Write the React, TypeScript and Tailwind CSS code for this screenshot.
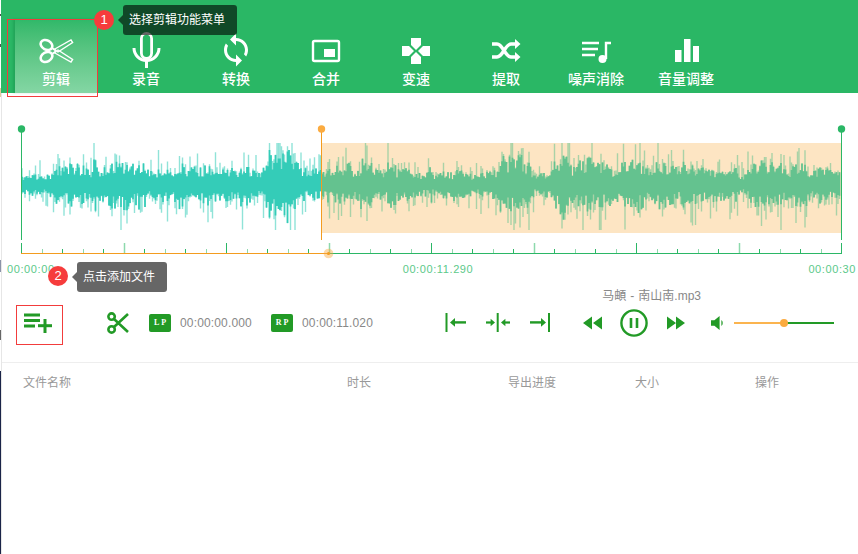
import type { ReactNode } from "react"

// deterministic noise so the wave form is the same on every load
function makeRandom(seed: number) {
  let s = seed
  return () => {
    s = (s + 0x6d2b79f5) | 0
    let t = Math.imul(s ^ (s >>> 15), 1 | s)
    t = (t + Math.imul(t ^ (t >>> 7), 61 | t)) ^ t
    return ((t ^ (t >>> 14)) >>> 0) / 4294967296
  }
}

const envelope: [number, number][] = [
  [21, 8], [48, 9], [55, 14], [80, 18], [120, 18], [150, 17], [190, 17], [230, 16], [255, 12], [266, 13],
  [268, 29], [290, 33], [300, 22], [310, 12], [321, 11], [335, 15], [360, 17], [390, 16], [410, 14], [430, 12],
  [445, 13], [480, 11], [498, 12], [502, 27], [525, 25], [535, 12], [552, 13], [560, 25], [572, 16], [585, 25],
  [597, 23], [612, 15], [630, 21], [650, 17], [665, 18], [697, 15], [730, 12], [747, 11], [763, 17], [797, 17],
  [815, 16], [830, 12], [841, 13],
]

function ampAt(x: number) {
  for (let i = 1; i < envelope.length; i++) {
    const [x0, a0] = envelope[i - 1]
    const [x1, a1] = envelope[i]
    if (x <= x1) return a0 + ((a1 - a0) * (x - x0)) / (x1 - x0)
  }
  return 10
}

function buildWave(from: number, to: number, seed: number) {
  const rnd = makeRandom(seed)
  let core = ""
  let peaks = ""
  const mid = 184.5
  let clump = 1
  let clumpLeft = 0
  for (let x = from + 1; x < to; x += 1.5) {
    // bars come in little groups of about the same height
    if (clumpLeft <= 0) {
      clump = 0.75 + 0.55 * rnd()
      clumpLeft = 2 + Math.floor(rnd() * 6)
    }
    clumpLeft--
    const a = ampAt(x) * clump
    const up = a * (0.5 + 0.7 * rnd())
    const down = a * (0.5 + 0.75 * rnd())
    core += `M${x} ${Math.max(143, mid - up).toFixed(1)}V${Math.min(230, mid + down).toFixed(1)}`
    const extraUp = Math.pow(rnd(), 4) * (a + 8)
    const extraDown = Math.pow(rnd(), 4) * (a + 10)
    peaks += `M${x} ${Math.max(143, mid - up - extraUp).toFixed(1)}V${Math.min(230, mid + down + extraDown).toFixed(1)}`
  }
  return { core, peaks }
}

const leftWave = buildWave(21, 321, 11)
const rightWave = buildWave(321, 841, 47)

const ticks = Array.from({ length: 41 }, (_, i) => i)

function WaveForm() {
  return (
    <svg width="856" height="140" viewBox="2 120 856 140" className="block">
      <rect x="321" y="143" width="520" height="90" fill="#fde5c3" />
      <path d={leftWave.peaks} stroke="#34ccb8" strokeOpacity="0.55" strokeWidth="1.4" fill="none" />
      <path d={leftWave.core} stroke="#34ccb8" strokeWidth="1.7" fill="none" />
      <path d={rightWave.peaks} stroke="#64c28f" strokeOpacity="0.55" strokeWidth="1.4" fill="none" />
      <path d={rightWave.core} stroke="#64c28f" strokeWidth="1.7" fill="none" />

      <path d="M21.5 129V240" stroke="#2bb766" />
      <circle cx="21.5" cy="129" r="3.7" fill="#2bb766" />
      <path d="M321.5 129V240" stroke="#f39c1f" />
      <circle cx="321.5" cy="129" r="3.7" fill="#fbab40" />
      <path d="M841.5 129V240" stroke="#2bb766" />
      <circle cx="841.5" cy="129" r="3.7" fill="#2bb766" />

      {ticks.map((i) => {
        const x = Math.round(21 + i * 20.5) + 0.5
        const tall = i % 5 === 0
        const light = i % 2 === 1
        return (
          <path
            key={i}
            d={`M${x} ${tall ? 243 : 249}V253`}
            stroke={light ? "#8dd9ac" : "#2bb766"}
            strokeWidth={tall && light ? 1.5 : 1}
          />
        )
      })}
      <path d="M21 253.5H328" stroke="#f39c1f" />
      <path d="M328 253.5H842" stroke="#2bb766" />
      <circle cx="328.5" cy="253.5" r="4.8" fill="#fbab40" fillOpacity="0.45" />
      <circle cx="328.5" cy="253.5" r="1.6" fill="#f39c1f" />
    </svg>
  )
}

function ScissorsIcon() {
  return (
    <svg width="36" height="36" viewBox="0 0 36 36" fill="none" stroke="white" strokeWidth="2">
      <ellipse cx="8.5" cy="13" rx="6.2" ry="4.6" transform="rotate(28 8.5 13)" strokeWidth="2.6" />
      <ellipse cx="8.5" cy="25" rx="6.2" ry="4.6" transform="rotate(-28 8.5 25)" strokeWidth="2.6" />
      <path d="M14 16l4 2.5M14 22l4-2.5" />
      <path d="M16 17.5L33 8l1.6 2.6L20 20z" strokeWidth="1.4" />
      <path d="M16 20.5L33 30l1.6-2.6L20 18z" strokeWidth="1.4" />
    </svg>
  )
}

function MicIcon() {
  return (
    <svg width="36" height="36" viewBox="0 0 36 36" fill="none" stroke="white">
      <rect x="13.4" y="1.4" width="10.2" height="25" rx="5.1" strokeWidth="2.8" />
      <path d="M6 16a12.5 12.5 0 0 0 25 0" strokeWidth="3" />
      <path d="M18.5 29V36" strokeWidth="3" />
    </svg>
  )
}

function SyncIcon() {
  return (
    <svg width="36" height="36" viewBox="0 0 24 24" fill="white">
      <path d="M12 4V1L8 5l4 4V6c3.31 0 6 2.69 6 6 0 1.01-.25 1.97-.7 2.8l1.46 1.46C19.54 15.03 20 13.57 20 12c0-4.42-3.58-8-8-8zm0 14c-3.31 0-6-2.69-6-6 0-1.01.25-1.97.7-2.8L5.24 7.74C4.46 8.97 4 10.43 4 12c0 4.42 3.58 8 8 8v3l4-4-4-4v3z" />
    </svg>
  )
}

function MergeIcon() {
  return (
    <svg width="36" height="36" viewBox="0 0 36 36" fill="none">
      <rect x="5" y="9" width="26" height="20" rx="1.5" stroke="white" strokeWidth="2.4" />
      <rect x="16" y="17" width="11" height="8" fill="white" />
    </svg>
  )
}

function SpeedIcon() {
  return (
    <svg width="36" height="36" viewBox="0 0 36 36" fill="white">
      <path d="M13 6h10v7l-5 5-5-5z" />
      <path d="M13 32h10v-7l-5-5-5 5z" />
      <path d="M4 14h7l5 5-5 5H4z" />
      <path d="M32 14h-7l-5 5 5 5h7z" />
    </svg>
  )
}

function ExtractIcon() {
  return (
    <svg width="36" height="36" viewBox="0 0 36 36" fill="white">
      <path d="M4 12h5c6 0 8 13 14 13h5M4 25h5c6 0 8-13 14-13h5" fill="none" stroke="white" strokeWidth="3.4" />
      <path d="M27 7l5.5 5-5.5 5zM27 20l5.5 5-5.5 5z" />
    </svg>
  )
}

function DenoiseIcon() {
  return (
    <svg width="36" height="36" viewBox="0 0 36 36" fill="none" stroke="white" strokeWidth="2.4">
      <path d="M4 11h17M4 17h16M4 23h13" />
      <path d="M28 27V11h5" />
      <circle cx="24.5" cy="27" r="4" fill="white" stroke="none" />
    </svg>
  )
}

function VolumeBarsIcon() {
  return (
    <svg width="36" height="36" viewBox="0 0 36 36" fill="white">
      <rect x="7" y="18" width="6.5" height="12" />
      <rect x="16" y="7" width="6.5" height="23" />
      <rect x="25" y="14" width="6" height="16" />
    </svg>
  )
}

const green = "#229a26"

function AddListIcon() {
  return (
    <svg width="28" height="20" viewBox="0 0 28 20" fill={green}>
      <rect x="0" y="0.5" width="16" height="3" />
      <rect x="0" y="6" width="16" height="3" />
      <rect x="0" y="11.5" width="11" height="3" />
      <rect x="14" y="11.2" width="14" height="3" />
      <rect x="19.5" y="6" width="3" height="14" />
    </svg>
  )
}

function CutIcon() {
  return (
    <svg width="22" height="22" viewBox="0 0 22 22" fill="none" stroke={green} strokeWidth="2.6">
      <circle cx="4.6" cy="4.6" r="3.2" />
      <circle cx="4.6" cy="17.4" r="3.2" />
      <path d="M7 7l14 13M7 15L21 2" />
    </svg>
  )
}

function PointBadge({ label }: { label: string }) {
  return (
    <span className="flex h-[18px] w-[22px] items-center justify-center rounded-[2px] bg-[#229a26] pl-[2px] font-['Liberation_Serif',serif] text-[8px] font-bold tracking-[2px] text-white">
      {label}
    </span>
  )
}

function ToStartIcon() {
  return (
    <svg width="21" height="20" viewBox="0 0 21 20" fill={green} className="block">
      <rect x="0.5" y="0" width="2" height="19" />
      <rect x="9" y="8.2" width="12" height="2.4" />
      <path d="M5 9.4l5-4.4v8.8z" />
    </svg>
  )
}

function ToMiddleIcon() {
  return (
    <svg width="24" height="20" viewBox="0 0 24 20" fill={green} className="block">
      <rect x="10.7" y="0" width="2" height="19" />
      <rect x="0" y="8.4" width="5" height="2.2" />
      <path d="M9 9.5L4.6 5.8v7.4z" />
      <rect x="19" y="8.4" width="5" height="2.2" />
      <path d="M15 9.5l4.4-3.7v7.4z" />
    </svg>
  )
}

function ToEndIcon() {
  return (
    <svg width="20" height="20" viewBox="0 0 20 20" fill={green} className="block">
      <rect x="18" y="0" width="2" height="19" />
      <rect x="0" y="8.2" width="12" height="2.4" />
      <path d="M16 9.4L11 5v8.8z" />
    </svg>
  )
}

function RewindIcon() {
  return (
    <svg width="19" height="14" viewBox="0 0 19 14" fill={green} className="block">
      <path d="M0 7l9-6.5v13zM10 7l9-6.5v13z" />
    </svg>
  )
}

function ForwardIcon() {
  return (
    <svg width="18" height="14" viewBox="0 0 18 14" fill={green} className="block">
      <path d="M0 .5L9 7l-9 6.5zM9 .5L18 7l-9 6.5z" />
    </svg>
  )
}

function PauseIcon() {
  return (
    <svg width="28" height="28" viewBox="0 0 28 28" fill="none" stroke={green} className="block">
      <circle cx="14" cy="14" r="12.6" strokeWidth="2.4" />
      <path d="M11 9v10M17 9v10" strokeWidth="2.6" />
    </svg>
  )
}

function SpeakerIcon() {
  return (
    <svg width="14" height="14" viewBox="0 0 14 14" fill={green} className="block">
      <path d="M0 4.2h3.4L8.6 0v14L3.4 9.8H0z" />
      <path d="M10.4 4a4 4 0 0 1 0 6z" />
    </svg>
  )
}

const tabs: { label: string; icon: ReactNode; active?: boolean }[] = [
  { label: "剪辑", icon: <ScissorsIcon />, active: true },
  { label: "录音", icon: <MicIcon /> },
  { label: "转换", icon: <SyncIcon /> },
  { label: "合并", icon: <MergeIcon /> },
  { label: "变速", icon: <SpeedIcon /> },
  { label: "提取", icon: <ExtractIcon /> },
  { label: "噪声消除", icon: <DenoiseIcon /> },
  { label: "音量调整", icon: <VolumeBarsIcon /> },
]

const columns = [
  { label: "文件名称", width: "w-[324px]" },
  { label: "时长", width: "w-[161px]" },
  { label: "导出进度", width: "w-[127px]" },
  { label: "大小", width: "w-[120px]" },
  { label: "操作", width: "w-[60px]" },
]

export default function App() {
  return (
    <div className="relative flex h-[554px] w-[858px] overflow-hidden bg-white font-['Liberation_Sans','Noto_Sans_CJK_SC',sans-serif]">
      {/* strip of the window behind */}
      <div className="flex w-px flex-col">
        <div className="mt-[14px] h-[2px] bg-[#555555]" />
        <div className="mt-[28px] h-[3px] bg-[#555555]" />
        <div className="mt-[41px] h-[9px] bg-[#e3c9a0]" />
        <div className="mt-[163px] h-[12px] bg-[#8a93a8]" />
        <div className="mt-[58px] h-[10px] bg-[#666666]" />
        <div className="mt-[31px] flex-1 bg-[#1a2448]" />
      </div>

      <div className="flex flex-1 flex-col">
        {/* Header */}
        <header className="flex h-[93px] bg-[#2ab765] pl-[10px]">
          {tabs.map((tab) => (
            <div key={tab.label} className="flex w-[90px] justify-center">
              <div
                className={`mt-[19px] flex h-[74px] w-[82px] flex-col items-center ${
                  tab.active
                    ? "bg-gradient-to-b from-[#2fb869] to-[#84d6a4] shadow-[-2px_0_2px_rgba(0,90,40,0.18)]"
                    : ""
                }`}
              >
                <div className="mt-[13px] h-[36px]">{tab.icon}</div>
                <span className="mt-[1px] text-[14px] leading-[20px] font-medium text-white">{tab.label}</span>
              </div>
            </div>
          ))}
        </header>

        <div className="flex flex-1 flex-col border-l border-[#e6e6e6]">
          {/* Wave */}
          <div className="pt-[27px]">
            <WaveForm />
          </div>
          <div className="flex h-[18px] items-center justify-between pr-[2px] pl-[5px] text-[11px] tracking-[0.6px] text-[#5cc98a]">
            <span>00:00:00</span>
            <span className="ml-[13px]">00:00:11.290</span>
            <span>00:00:30</span>
          </div>

          {/* Track title */}
          <div className="mt-[10px] flex h-[15px] items-center justify-end pr-[157px] text-[12px] text-[#888888]">
            马頔<span className="mx-[4px]">-</span>南山南.mp3
          </div>

          {/* Controls */}
          <div className="flex h-[40px] items-center pl-[22px] text-[12px] text-[#888888]">
            <AddListIcon />
            <div className="ml-[55px]">
              <CutIcon />
            </div>
            <div className="ml-[20px]">
              <PointBadge label="LP" />
            </div>
            <span className="ml-[9px] w-[72px] tracking-[0.15px]">00:00:00.000</span>
            <div className="ml-[19px]">
              <PointBadge label="RP" />
            </div>
            <span className="ml-[9px] w-[72px] tracking-[0.15px]">00:00:11.020</span>
            <div className="ml-[71px]">
              <ToStartIcon />
            </div>
            <div className="ml-[20px]">
              <ToMiddleIcon />
            </div>
            <div className="ml-[20px]">
              <ToEndIcon />
            </div>
            <div className="ml-[33px]">
              <RewindIcon />
            </div>
            <div className="ml-[18px]">
              <PauseIcon />
            </div>
            <div className="ml-[19px]">
              <ForwardIcon />
            </div>
            <div className="ml-[26px]">
              <SpeakerIcon />
            </div>
            <div className="relative ml-[9px] flex w-[100px]">
              <div className="h-[2px] w-1/2 bg-[#fbb44f]" />
              <div className="h-[2px] w-1/2 bg-[#229a26]" />
              <div className="absolute top-[-3px] left-[46px] h-[8px] w-[8px] rounded-full bg-[#fbab40]" />
            </div>
          </div>

          {/* File table */}
          <div className="mt-[19px] flex h-[41px] items-center border-t border-[#eeeeee] pl-[21px] text-[12px] text-[#999999]">
            {columns.map((col) => (
              <span key={col.label} className={col.width}>
                {col.label}
              </span>
            ))}
          </div>
        </div>
      </div>

      {/* Guide overlay */}
      <div className="absolute top-[19px] left-[7px] h-[78px] w-[91px] border border-[#f23c3c]" />
      <div className="absolute top-[305px] left-[16px] h-[40px] w-[47px] border border-[#f23c3c]" />

      <div className="absolute top-[10px] left-[94px] flex h-[20px] w-[20px] items-center justify-center rounded-full bg-[#f63c3c] text-[13px] text-white">
        1
      </div>
      <div className="absolute top-[5px] left-[123px] flex h-[30px] w-[114px] items-center rounded-[3px] bg-black/60 pl-[6px] text-[12px] text-white">
        <span className="absolute top-[10px] left-[-5px] h-0 w-0 border-y-[5px] border-r-[5px] border-y-transparent border-r-black/60" />
        选择剪辑功能菜单
      </div>

      <div className="absolute top-[266px] left-[48px] flex h-[20px] w-[20px] items-center justify-center rounded-full bg-[#f63c3c] text-[13px] text-white">
        2
      </div>
      <div className="absolute top-[262px] left-[77px] flex h-[30px] w-[90px] items-center rounded-[3px] bg-[#666666] pl-[6px] text-[12px] text-white">
        <span className="absolute top-[10px] left-[-5px] h-0 w-0 border-y-[5px] border-r-[5px] border-y-transparent border-r-[#666666]" />
        点击添加文件
      </div>
    </div>
  )
}
